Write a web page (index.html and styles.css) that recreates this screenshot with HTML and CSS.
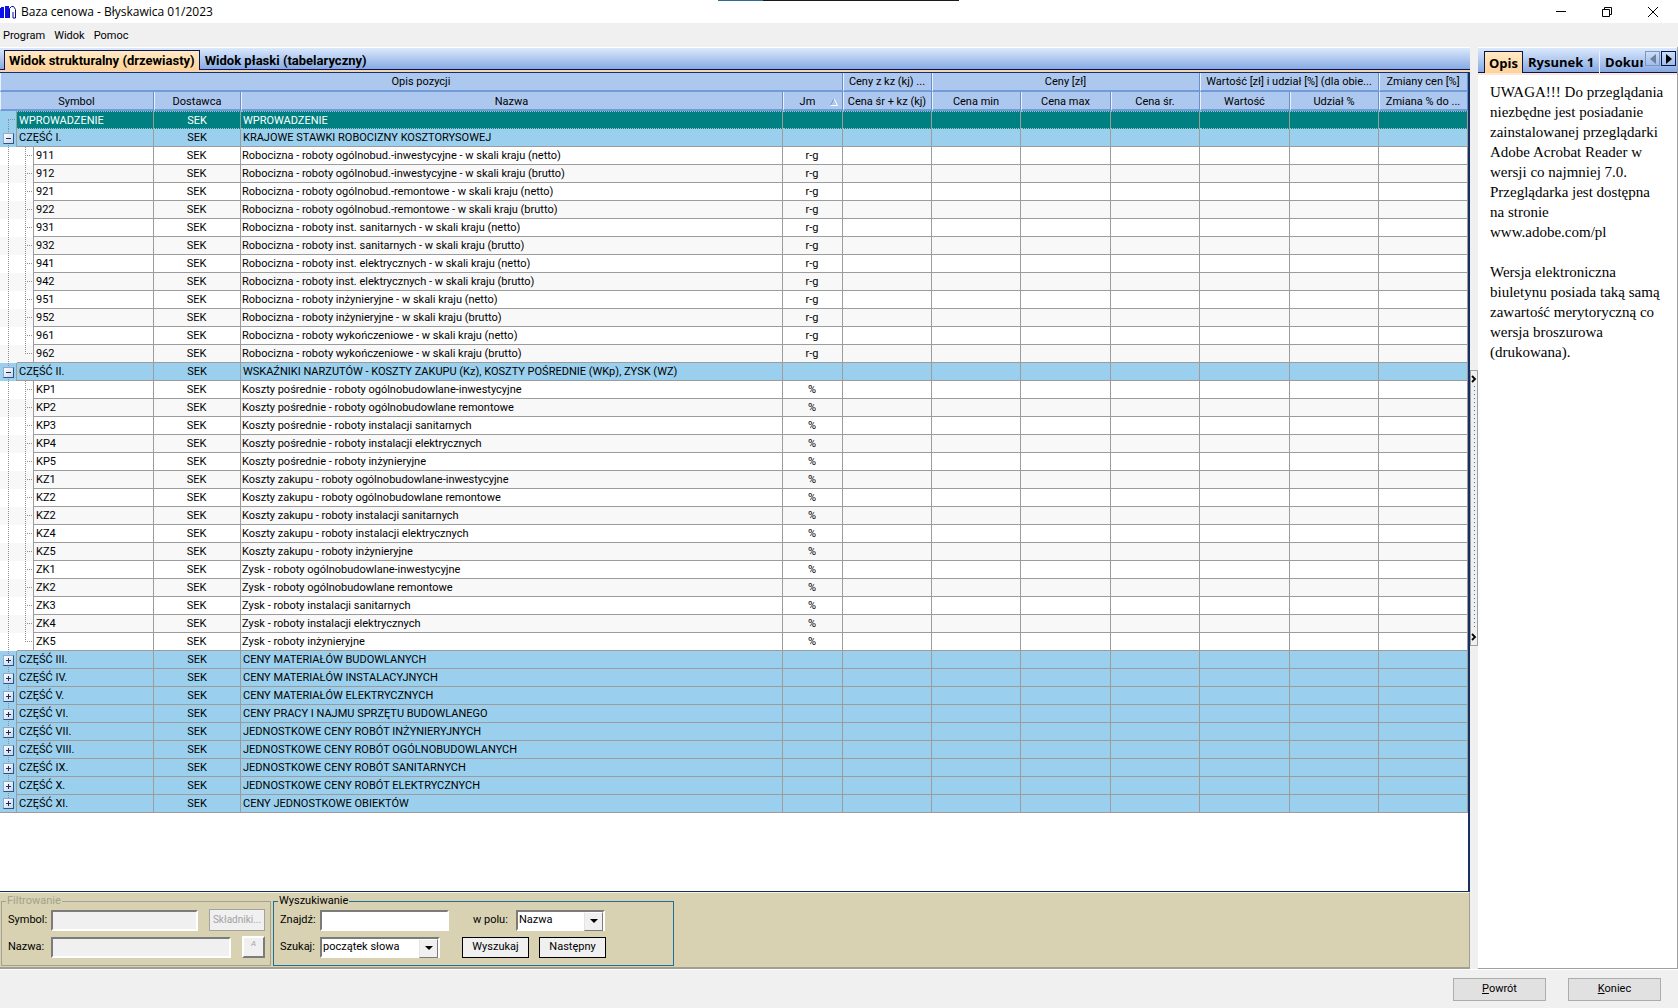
FILE: index.html
```
<!DOCTYPE html>
<html lang="pl">
<head>
    <meta charset="UTF-8">
    <meta name="viewport" content="width=device-width, initial-scale=1.0">
    <title>Baza cenowa - Błyskawica 01/2023</title>
    <link rel="stylesheet" href="styles.css">
</head>
<body>
    <div class="top-strip"></div>

    <header class="title-bar">
        <svg class="app-icon" width="16" height="14" viewBox="0 0 16 14" aria-hidden="true">
            <path d="M0 3h1V2h3v11H0zM5 1h4v12H5z" fill="#0a12e8"/>
            <path d="M9.500 13V3.500l2-2h2l2 3v8.500h-2.500V7" fill="#fff" stroke="#0a0a8c"/>
        </svg>
        <h1 class="title">Baza cenowa - Błyskawica 01/2023</h1>
        <div class="window-buttons">
            <button type="button" aria-label="Minimalizuj">
                <svg width="12" height="12" viewBox="0 0 12 12"><path d="M1 5.5h10" stroke="#000"/></svg>
            </button>
            <button type="button" aria-label="Przywróć">
                <svg width="12" height="12" viewBox="0 0 12 12"><path d="M1.5 3.5h7v7h-7zM3.5 3V1.5h7v7H9" fill="none" stroke="#000"/></svg>
            </button>
            <button type="button" aria-label="Zamknij">
                <svg width="12" height="12" viewBox="0 0 12 12"><path d="M1 1l10 10M11 1L1 11" stroke="#000"/></svg>
            </button>
        </div>
    </header>

    <nav class="menu">
        <button type="button">Program</button>
        <button type="button">Widok</button>
        <button type="button">Pomoc</button>
    </nav>

    <main class="workspace">
        <section class="left-panel">
            <div class="tabs">
                <button type="button" class="tab active">Widok strukturalny (drzewiasty)</button>
                <button type="button" class="tab">Widok płaski (tabelaryczny)</button>
            </div>

            <div class="grid">
                <table>
                    <colgroup>
                        <col class="col-tree">
                        <col class="col-tree">
                        <col class="col-symbol">
                        <col class="col-supplier">
                        <col>
                        <col class="col-unit">
                        <col class="col-price">
                        <col class="col-price">
                        <col class="col-price-wide">
                        <col class="col-price">
                        <col class="col-price-wide">
                        <col class="col-price">
                        <col class="col-price">
                    </colgroup>
                    <thead>
                        <tr>
                            <th colspan="6">Opis pozycji</th>
                            <th>Ceny z kz (kj) ...</th>
                            <th colspan="3">Ceny [zł]</th>
                            <th colspan="2">Wartość [zł] i udział [%] (dla obie...</th>
                            <th>Zmiany cen [%]</th>
                        </tr>
                        <tr class="columns">
                            <th colspan="3">Symbol</th>
                            <th>Dostawca</th>
                            <th>Nazwa</th>
                            <th class="sorted">
                                <span>Jm</span>
                                <svg width="8" height="8" viewBox="0 0 8 8"><path d="M4 .5L.5 7.5" stroke="#7b98cc" fill="none"/><path d="M4 .5l3.500 7h-7" stroke="#fff" fill="none"/></svg>
                            </th>
                            <th>Cena śr + kz (kj)</th>
                            <th>Cena min</th>
                            <th>Cena max</th>
                            <th>Cena śr.</th>
                            <th>Wartość</th>
                            <th>Udział %</th>
                            <th>Zmiana % do ...</th>
                        </tr>
                    </thead>
                    <tbody id="priceRows"></tbody>
                </table>
            </div>

            <form class="filters">
                <fieldset class="filter-box" disabled>
                    <legend>Filtrowanie</legend>
                    <div class="field-row">
                        <label for="symbol">Symbol:</label>
                        <input type="text" id="symbol">
                        <button type="button" class="parts">Składniki...</button>
                    </div>
                    <div class="field-row">
                        <label for="name">Nazwa:</label>
                        <input type="text" id="name">
                        <button type="button" class="match-case"><i>A</i></button>
                    </div>
                </fieldset>
                <fieldset class="search-box">
                    <legend>Wyszukiwanie</legend>
                    <div class="field-row">
                        <label for="find">Znajdź:</label>
                        <input type="text" id="find">
                        <label for="field" class="in-field">w polu:</label>
                        <span class="select select-field">
                            <select id="field">
                                <option>Nazwa</option>
                                <option>Symbol</option>
                            </select>
                        </span>
                    </div>
                    <div class="field-row">
                        <label for="mode">Szukaj:</label>
                        <span class="select select-mode">
                            <select id="mode">
                                <option>początek słowa</option>
                            </select>
                        </span>
                        <div class="search-buttons">
                            <button type="button">Wyszukaj</button>
                            <button type="button">Następny</button>
                        </div>
                    </div>
                </fieldset>
            </form>
        </section>

        <div class="splitter">
            <button type="button" aria-label="Zwiń panel opisu">
                <svg width="6" height="8" viewBox="0 0 6 8"><path d="M1 1l3 3-3 3" fill="none" stroke="#000" stroke-width="1.8"/></svg>
                <span class="grip"></span>
                <svg width="6" height="8" viewBox="0 0 6 8"><path d="M1 1l3 3-3 3" fill="none" stroke="#000" stroke-width="1.8"/></svg>
            </button>
        </div>

        <aside class="right-panel">
            <div class="tabs side-tabs">
                <button type="button" class="tab active">Opis</button>
                <button type="button" class="tab">Rysunek 1</button>
                <button type="button" class="tab cut">Dokument</button>
                <div class="tab-arrows">
                    <button type="button" aria-label="Poprzednia zakładka" disabled>
                        <svg width="6" height="10" viewBox="0 0 6 10"><path d="M6 0v10L0 5z" fill="#6f7f9c"/></svg>
                    </button>
                    <button type="button" aria-label="Następna zakładka">
                        <svg width="6" height="10" viewBox="0 0 6 10"><path d="M0 0v10l6-5z" fill="#000"/></svg>
                    </button>
                </div>
            </div>
            <div class="description">
                <p>UWAGA!!! Do przeglądania niezbędne jest posiadanie zainstalowanej przeglądarki Adobe Acrobat Reader w wersji co najmniej 7.0. Przeglądarka jest dostępna na stronie www.adobe.com/pl</p>
                <p>Wersja elektroniczna biuletynu posiada taką samą zawartość merytoryczną co wersja broszurowa (drukowana).</p>
            </div>
        </aside>
    </main>

    <footer class="actions">
        <button type="button"><u>P</u>owrót</button>
        <button type="button"><u>K</u>oniec</button>
    </footer>

    <script>
        const groups = [
            { symbol: 'WPROWADZENIE', name: 'WPROWADZENIE', selected: true },
            { symbol: 'CZĘŚĆ I.', name: 'KRAJOWE STAWKI ROBOCIZNY KOSZTORYSOWEJ', unit: 'r-g', items: [
                ['911', 'Robocizna - roboty ogólnobud.-inwestycyjne - w skali kraju (netto)'],
                ['912', 'Robocizna - roboty ogólnobud.-inwestycyjne - w skali kraju (brutto)'],
                ['921', 'Robocizna - roboty ogólnobud.-remontowe - w skali kraju (netto)'],
                ['922', 'Robocizna - roboty ogólnobud.-remontowe - w skali kraju (brutto)'],
                ['931', 'Robocizna - roboty inst. sanitarnych - w skali kraju (netto)'],
                ['932', 'Robocizna - roboty inst. sanitarnych - w skali kraju (brutto)'],
                ['941', 'Robocizna - roboty inst. elektrycznych - w skali kraju (netto)'],
                ['942', 'Robocizna - roboty inst. elektrycznych - w skali kraju (brutto)'],
                ['951', 'Robocizna - roboty inżynieryjne - w skali kraju (netto)'],
                ['952', 'Robocizna - roboty inżynieryjne - w skali kraju (brutto)'],
                ['961', 'Robocizna - roboty wykończeniowe - w skali kraju (netto)'],
                ['962', 'Robocizna - roboty wykończeniowe - w skali kraju (brutto)']
            ] },
            { symbol: 'CZĘŚĆ II.', name: 'WSKAŹNIKI NARZUTÓW - KOSZTY ZAKUPU (Kz), KOSZTY POŚREDNIE (WKp), ZYSK (WZ)', unit: '%', items: [
                ['KP1', 'Koszty pośrednie - roboty ogólnobudowlane-inwestycyjne'],
                ['KP2', 'Koszty pośrednie - roboty ogólnobudowlane remontowe'],
                ['KP3', 'Koszty pośrednie - roboty instalacji sanitarnych'],
                ['KP4', 'Koszty pośrednie - roboty instalacji elektrycznych'],
                ['KP5', 'Koszty pośrednie - roboty inżynieryjne'],
                ['KZ1', 'Koszty zakupu - roboty ogólnobudowlane-inwestycyjne'],
                ['KZ2', 'Koszty zakupu - roboty ogólnobudowlane remontowe'],
                ['KZ2', 'Koszty zakupu - roboty instalacji sanitarnych'],
                ['KZ4', 'Koszty zakupu - roboty instalacji elektrycznych'],
                ['KZ5', 'Koszty zakupu - roboty inżynieryjne'],
                ['ZK1', 'Zysk - roboty ogólnobudowlane-inwestycyjne'],
                ['ZK2', 'Zysk - roboty ogólnobudowlane remontowe'],
                ['ZK3', 'Zysk - roboty instalacji sanitarnych'],
                ['ZK4', 'Zysk - roboty instalacji elektrycznych'],
                ['ZK5', 'Zysk - roboty inżynieryjne']
            ] },
            { symbol: 'CZĘŚĆ III.', name: 'CENY MATERIAŁÓW BUDOWLANYCH' },
            { symbol: 'CZĘŚĆ IV.', name: 'CENY MATERIAŁÓW INSTALACYJNYCH' },
            { symbol: 'CZĘŚĆ V.', name: 'CENY MATERIAŁÓW ELEKTRYCZNYCH' },
            { symbol: 'CZĘŚĆ VI.', name: 'CENY PRACY I NAJMU SPRZĘTU BUDOWLANEGO' },
            { symbol: 'CZĘŚĆ VII.', name: 'JEDNOSTKOWE CENY ROBÓT INŻYNIERYJNYCH' },
            { symbol: 'CZĘŚĆ VIII.', name: 'JEDNOSTKOWE CENY ROBÓT OGÓLNOBUDOWLANYCH' },
            { symbol: 'CZĘŚĆ IX.', name: 'JEDNOSTKOWE CENY ROBÓT SANITARNYCH' },
            { symbol: 'CZĘŚĆ X.', name: 'JEDNOSTKOWE CENY ROBÓT ELEKTRYCZNYCH' },
            { symbol: 'CZĘŚĆ XI.', name: 'CENY JEDNOSTKOWE OBIEKTÓW' }
        ];

        const emptyCells = '<td></td>'.repeat(7);

        function expander(open) {
            const bars = open ? 'M2 4.5h5' : 'M2 4.5h5M4.5 2v5';
            return `<button type="button" class="expander" aria-label="${open ? 'Zwiń' : 'Rozwiń'}"><svg width="9" height="9" viewBox="0 0 9 9"><path d="${bars}" stroke="#1c2f5c"/></svg></button>`;
        }

        let html = '';
        groups.forEach(group => {
            html += `<tr class="group${group.selected ? ' selected' : ''}">`;
            html += `<td class="tree">${group.selected ? '' : expander(!!group.items)}</td>`;
            html += `<td colspan="2">${group.symbol}</td><td class="center">SEK</td><td>${group.name}</td><td></td>${emptyCells}</tr>`;

            (group.items || []).forEach((item, i) => {
                const last = i === group.items.length - 1;
                html += `<tr class="item${i % 2 ? ' odd' : ''}${last ? ' last' : ''}">`;
                html += `<td class="tree"></td><td class="tree branch"></td><td>${item[0]}</td>`;
                html += `<td class="center">SEK</td><td>${item[1]}</td><td class="center">${group.unit}</td>${emptyCells}</tr>`;
            });
        });
        document.getElementById('priceRows').innerHTML = html;
    </script>
</body>
</html>
```
FILE: styles.css
```
* {
    box-sizing: border-box;
}

body {
    display: flex;
    flex-direction: column;
    height: 100vh;
    margin: 0;
    background-color: #f0f0f0;
    color: #000;
    font-family: Roboto, sans-serif;
    font-size: 11px;
    line-height: 16px;
    overflow: hidden;
}

button, input, select {
    font: inherit;
    color: inherit;
    border-radius: 0;
    margin: 0;
    padding: 0;
}

/* Sliver of another window above the title bar */
.top-strip {
    position: absolute;
    top: 0;
    left: 50%;
    width: 241px;
    height: 1px;
    margin-left: -121px;
    background: linear-gradient(to right, #2c6b93 45px, #1a1a1a 45px);
}

/* Title bar and menu */
.title-bar {
    display: flex;
    align-items: center;
    flex: none;
    height: 23px;
    background-color: #fff;
}

.title {
    flex: 1;
    margin: 0 0 0 5px;
    font-family: "Open Sans", sans-serif;
    font-size: 12px;
    font-weight: normal;
}

.window-buttons {
    display: flex;
    padding-right: 2px;
}

.window-buttons button {
    display: flex;
    align-items: center;
    justify-content: center;
    width: 46px;
    height: 20px;
    border: none;
    background: none;
}

.menu {
    display: flex;
    align-items: center;
    flex: none;
    gap: 9px;
    height: 24px;
    padding: 2px 0 0 3px;
}

.menu button {
    border: none;
    background: none;
}

/* Main area */
.workspace {
    display: flex;
    flex: 1;
    min-height: 0;
}

.left-panel {
    display: flex;
    flex: 1;
    flex-direction: column;
    min-width: 0;
}

.tabs {
    display: flex;
    align-items: flex-end;
    flex: none;
    height: 25px;
    padding-left: 4px;
    border-top: 1px solid #fff;
    border-bottom: 2px solid #f5d5b5;
    background: linear-gradient(#dbe9fc, #83a7e2);
    box-shadow: inset 0 -1px #0a1450;
}

.tab {
    height: 20px;
    padding: 2px 5px 0;
    border: none;
    background: none;
    font-size: 13px;
    font-weight: bold;
    white-space: nowrap;
}

.tab.active {
    padding: 1px 4px 0;
    border: 1px solid #0a1450;
    border-bottom: none;
    background: linear-gradient(#ffe9c4, #ffd298);
}

.grid {
    flex: 1;
    min-height: 0;
    overflow: hidden;
    border: solid #17305f;
    border-width: 1px 2px 1px 0;
    background-color: #fff;
}

table {
    width: 100%;
    table-layout: fixed;
    border-spacing: 0;
}

.col-tree {
    width: 17px;
}

.col-symbol {
    width: 120px;
}

.col-supplier {
    width: 87px;
}

.col-unit {
    width: 60px;
}

.col-price {
    width: 89px;
}

.col-price-wide {
    width: 90px;
}

th, td {
    height: 18px;
    overflow: hidden;
    white-space: nowrap;
}

th {
    height: 19px;
    padding: 1px 2px 0 1px;
    border-right: 1px solid #6a8ecb;
    border-bottom: 2px solid #7299d8;
    border-left: 1px solid #e8f1fd;
    background-color: #adc8ee;
    font-weight: normal;
    text-align: center;
}

.columns th {
    padding-top: 3px;
    line-height: 14px;
}

.sorted svg {
    float: right;
    margin: 3px 2px 0 0;
}

td {
    padding: 1px 2px 0 1px;
    border-right: 1px solid #9c9c9c;
    border-bottom: 1px solid #9c9c9c;
}

.center {
    text-align: center;
}

.group td {
    background-color: #9ad0ed;
}

.group.selected td {
    border-top: 1px dotted #9ac7c7;
    border-bottom: 1px dotted #9ac7c7;
    background-color: #008080;
    color: #fff;
    line-height: 15px;
}

.group td + td,
.item td:nth-child(3) {
    padding-left: 2px;
}

.odd td {
    background-color: #f8f8f8;
}

/* Tree lines */
td.tree {
    padding: 0;
    border-right: none;
    border-bottom: none;
    background-image: repeating-linear-gradient(#8f8f8f 0 1px, transparent 1px 2px);
    background-position: 8px 0;
    background-repeat: no-repeat;
    background-size: 1px 100%;
}

.group td.tree {
    border-right: 1px solid #9c9c9c;
}

.group.selected td.tree {
    border-top: none;
    border-bottom: none;
    background-color: #9ad0ed;
    background-image:
        repeating-linear-gradient(#8f8f8f 0 1px, transparent 1px 2px),
        repeating-linear-gradient(to right, #8f8f8f 0 1px, transparent 1px 2px);
    background-position: 8px 9px, 8px 8px;
    background-size: 1px 9px, 9px 1px;
}

.item td.branch {
    border-right: 1px solid #9c9c9c;
    background-image:
        repeating-linear-gradient(#8f8f8f 0 1px, transparent 1px 2px),
        repeating-linear-gradient(to right, #8f8f8f 0 1px, transparent 1px 2px);
    background-position: 8px 0, 8px 8px;
    background-size: 1px 100%, 8px 1px;
}

.item.last td.branch {
    border-bottom: 1px solid #9c9c9c;
    background-size: 1px 9px, 8px 1px;
}

.group:last-child td {
    border-bottom: 1px solid #9c9c9c;
}

.group:last-child td.tree {
    background-size: 1px 9px;
}

.expander {
    display: block;
    width: 11px;
    height: 11px;
    margin-left: 3px;
    border: 1px solid;
    border-color: #8fa9cf #33507f #33507f #8fa9cf;
    background: linear-gradient(135deg, #fff, #c3d3ee);
}

.expander svg {
    display: block;
}

/* Filter and search forms */
.filters {
    display: flex;
    flex: none;
    gap: 2px;
    padding: 1px 0 1px 1px;
    border-top: 1px solid #f4f1e2;
    border-right: 1px solid #a09f94;
    border-bottom: 2px solid #a09f94;
    background-color: #d8d2b2;
}

fieldset {
    display: flex;
    flex-direction: column;
    gap: 5px;
    min-width: 0;
    margin: 0;
    padding: 1px 5px 7px 6px;
    border: 1px solid #a3a18f;
}

legend {
    margin-left: -2px;
    padding: 0 1px;
    line-height: 14px;
}

.filter-box {
    width: 270px;
}

.filter-box legend {
    color: #a3a18f;
}

.search-box {
    width: 401px;
    border-color: #1f6f98;
}

.field-row {
    display: flex;
    align-items: center;
    height: 22px;
}

.field-row label {
    width: 43px;
}

.search-box .field-row label {
    width: 40px;
}

.search-box .field-row .in-field {
    width: 43px;
    margin-left: 24px;
}

input, .select {
    height: 21px;
    border: 2px solid;
    border-color: #7b7b7b #fff #fff #7b7b7b;
    background-color: #fff;
}

.filter-box input {
    flex: 1;
    min-width: 0;
    background-color: #f0f0f0;
}

.filter-box button {
    height: 22px;
    margin-left: 11px;
    border: 1px solid #a3a3a3;
    background-color: #f0f0f0;
    color: #a3a3a3;
}

.filter-box .parts {
    width: 56px;
    font-size: 10px;
}

.filter-box .match-case {
    width: 23px;
    border: 2px solid;
    border-color: #fff #7b7b7b #7b7b7b #fff;
    font-size: 8px;
    line-height: 8px;
    padding-bottom: 6px;
}

.search-box input {
    width: 129px;
}

.select {
    position: relative;
}

.select select {
    display: block;
    width: 100%;
    height: 17px;
    padding-left: 1px;
    border: none;
    background: none;
    appearance: none;
}

.select::before {
    content: "";
    position: absolute;
    top: 0;
    right: 0;
    width: 17px;
    height: 17px;
    border: 1px solid;
    border-color: #fff #7b7b7b #7b7b7b #e3e3e3;
    background-color: #f0f0f0;
    pointer-events: none;
}

.select::after {
    content: "";
    position: absolute;
    top: 7px;
    right: 5px;
    border: 4px solid transparent;
    border-top-color: #000;
    border-bottom: none;
    pointer-events: none;
}

.select-field {
    width: 89px;
}

.select-mode {
    width: 120px;
}

.search-buttons {
    display: flex;
    gap: 10px;
    margin-left: 22px;
}

.search-buttons button {
    width: 67px;
    height: 21px;
    border: 1px solid #000;
    background-color: #f0f0f0;
}

/* Splitter between the grid and the description */
.splitter {
    display: flex;
    align-items: center;
    flex: none;
    width: 8px;
}

.splitter button {
    display: flex;
    flex-direction: column;
    align-items: center;
    gap: 3px;
    width: 8px;
    height: 30%;
    padding: 4px 0;
    border: 1px solid #a0a0a0;
    background-color: #f0f0f0;
}

.grip {
    flex: 1;
    width: 1px;
    background: repeating-linear-gradient(#3d6fae 0 1px, transparent 1px 4px);
}

/* Description panel */
.right-panel {
    display: flex;
    flex: none;
    flex-direction: column;
    width: 200px;
    border-right: 1px solid #a0a0a0;
    border-bottom: 1px solid #a0a0a0;
    background-color: #fff;
}

.side-tabs {
    height: 28px;
    padding-left: 6px;
    border-bottom-color: #fbe6d8;
}

.side-tabs .tab {
    height: 22px;
    padding-top: 0;
    font-family: "Open Sans", sans-serif;
}

.side-tabs .cut {
    flex: 1;
    min-width: 0;
    overflow: hidden;
    border-left: 1px solid #e8f1fd;
    padding-right: 0;
    text-align: left;
}

.tab-arrows {
    display: flex;
    flex: none;
    gap: 1px;
    align-self: flex-start;
    margin: 3px 1px 0 2px;
}

.tab-arrows button {
    display: flex;
    align-items: center;
    justify-content: center;
    width: 15px;
    height: 15px;
    border: 1px solid #0a1450;
    background: none;
}

.tab-arrows button:disabled {
    border-color: #8095bd;
}

.description {
    padding: 7px 11px 0 12px;
    font-family: "Liberation Serif", serif;
    font-size: 15px;
    line-height: 20px;
}

.description p {
    margin: 0 0 20px;
}

/* Bottom buttons */
.actions {
    display: flex;
    align-items: center;
    justify-content: flex-end;
    flex: none;
    gap: 22px;
    height: 39px;
    padding-right: 17px;
    border-top: 1px solid #fff;
}

.actions button {
    width: 93px;
    height: 23px;
    border: 1px solid #adadad;
    background-color: #e1e1e1;
}
```
